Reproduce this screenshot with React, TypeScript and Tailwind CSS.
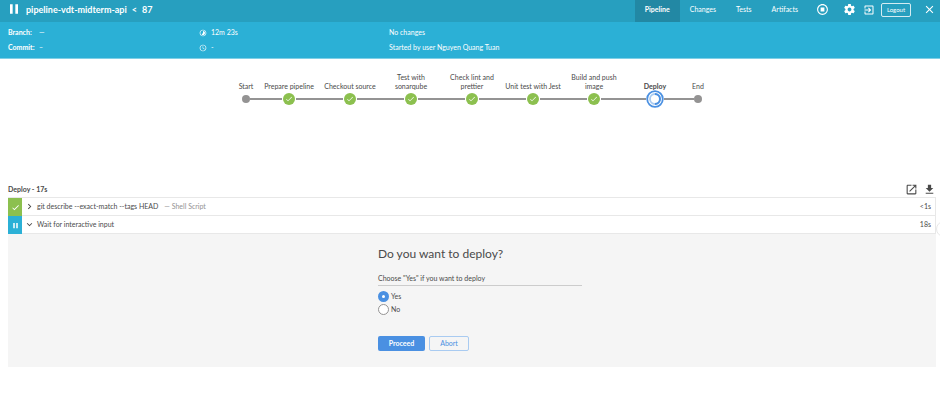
import type { ReactNode } from "react";

type StageState = "edge" | "done" | "running";

const stages: { name: string; state: StageState }[] = [
  { name: "Start", state: "edge" },
  { name: "Prepare pipeline", state: "done" },
  { name: "Checkout source", state: "done" },
  { name: "Test with sonarqube", state: "done" },
  { name: "Check lint and prettier", state: "done" },
  { name: "Unit test with Jest", state: "done" },
  { name: "Build and push image", state: "done" },
  { name: "Deploy", state: "running" },
  { name: "End", state: "edge" },
];

const tabs = ["Pipeline", "Changes", "Tests", "Artifacts"];

function Icon({ d, className }: { d: string; className: string }) {
  return (
    <svg viewBox="0 0 24 24" fill="currentColor" className={className} aria-hidden="true">
      <path d={d} />
    </svg>
  );
}

const icons = {
  check: "M9 16.17L4.83 12l-1.42 1.41L9 19 21 7l-1.41-1.41z",
  pause: "M6 19h4V5H6v14zm8-14v14h4V5h-4z",
  right: "M10 6L8.59 7.41 13.17 12l-4.58 4.59L10 18l6-6z",
  down: "M16.59 8.59L12 13.17 7.41 8.59 6 10l6 6 6-6z",
  close:
    "M19 6.41L17.59 5 12 10.59 6.41 5 5 6.41 10.59 12 5 17.59 6.41 19 12 13.41 17.59 19 19 17.59 13.41 12z",
  launch:
    "M19 19H5V5h7V3H5c-1.11 0-2 .9-2 2v14c0 1.1.89 2 2 2h14c1.1 0 2-.9 2-2v-7h-2v7zM14 3v2h3.59l-9.83 9.83 1.41 1.41L19 6.41V10h2V3h-7z",
  download: "M19 9h-4V3H9v6H5l7 7 7-7zM5 18v2h14v-2H5z",
  exit:
    "M10.09 15.59L11.5 17l5-5-5-5-1.41 1.41L12.67 11H3v2h9.67l-2.58 2.59zM19 3H5c-1.11 0-2 .9-2 2v4h2V5h14v14H5v-4H3v4c0 1.1.89 2 2 2h14c1.1 0 2-.9 2-2V5c0-1.1-.9-2-2-2z",
  gear:
    "M19.43 12.98c.04-.32.07-.64.07-.98s-.03-.66-.07-.98l2.11-1.65c.19-.15.24-.42.12-.64l-2-3.46c-.12-.22-.39-.3-.61-.22l-2.49 1c-.52-.4-1.08-.73-1.69-.98l-.38-2.65C14.46 2.18 14.25 2 14 2h-4c-.25 0-.46.18-.49.42l-.38 2.65c-.61.25-1.17.59-1.69.98l-2.49-1c-.23-.09-.49 0-.61.22l-2 3.46c-.13.22-.07.49.12.64l2.11 1.65c-.04.32-.07.65-.07.98s.03.66.07.98l-2.11 1.65c-.19.15-.24.42-.12.64l2 3.46c.12.22.39.3.61.22l2.49-1c.52.4 1.08.73 1.69.98l.38 2.65c.03.24.24.42.49.42h4c.25 0 .46-.18.49-.42l.38-2.65c.61-.25 1.17-.59 1.69-.98l2.49 1c.23.09.49 0 .61-.22l2-3.46c.12-.22.07-.49-.12-.64l-2.11-1.65zM12 15.5c-1.93 0-3.5-1.57-3.5-3.5s1.57-3.5 3.5-3.5 3.5 1.57 3.5 3.5-1.57 3.5-3.5 3.5z",
  timelapse:
    "M16.24 7.76C15.07 6.59 13.54 6 12 6v6l-4.24 4.24c2.34 2.34 6.14 2.34 8.49 0 2.34-2.34 2.34-6.14-.01-8.48zM12 2C6.48 2 2 6.48 2 12s4.48 10 10 10 10-4.48 10-10S17.52 2 12 2zm0 18c-4.42 0-8-3.58-8-8s3.58-8 8-8 8 3.58 8 8-3.58 8-8 8z",
  clock:
    "M11.99 2C6.47 2 2 6.48 2 12s4.47 10 9.99 10C17.52 22 22 17.52 22 12S17.52 2 11.99 2zM12 20c-4.42 0-8-3.58-8-8s3.58-8 8-8 8 3.58 8 8-3.58 8-8 8zm.5-13H11v6l5.25 3.15.75-1.23-4.5-2.67z",
  stop:
    "M12 2C6.48 2 2 6.48 2 12s4.48 10 10 10 10-4.48 10-10S17.52 2 12 2zm0 18c-4.42 0-8-3.58-8-8s3.58-8 8-8 8 3.58 8 8-3.58 8-8 8zM8.5 8.5h7v7h-7z",
};

function Marker({ state }: { state: StageState }) {
  if (state === "edge") return <span className="size-2 shrink-0 rounded-full bg-[#949393]" />;
  if (state === "done")
    return (
      <span className="mx-px flex size-3 shrink-0 items-center justify-center rounded-full bg-[#8cc04f] text-white">
        <Icon d={icons.check} className="size-2" />
      </span>
    );
  return (
    <svg viewBox="0 0 18 18" className="size-[18px] shrink-0" fill="none" aria-hidden="true">
      <circle cx="9" cy="9" r="7.8" fill="white" stroke="#4a90e2" strokeWidth="1.8" />
      <circle cx="9" cy="9" r="5" stroke="#a9cbf1" strokeWidth="1.8" />
      <path d="M9 4a5 5 0 0 1 0 10" stroke="#4a90e2" strokeWidth="2" />
    </svg>
  );
}

function Stage({ name, state, index }: { name: string; state: StageState; index: number }) {
  const line = "h-[2px] flex-1";
  return (
    <li className={`flex flex-col ${state === "edge" ? "w-[25px]" : "w-[61px]"}`}>
      <span
        className={`flex h-[18px] items-end justify-center text-center leading-[9px] ${
          state === "running" ? "font-bold" : ""
        }`}
      >
        <span className="max-w-[56px]">{name}</span>
      </span>
      <span className="flex h-4 items-center">
        <span className={`${line} ${index === 0 ? "" : "bg-[#949393]"}`} />
        <Marker state={state} />
        <span className={`${line} ${index === stages.length - 1 ? "" : "bg-[#949393]"}`} />
      </span>
    </li>
  );
}

function Step({
  done,
  time,
  children,
}: {
  done: boolean;
  time: string;
  children: ReactNode;
}) {
  return (
    <li className="flex h-[18px] items-stretch border-r border-b border-[#e8e8e8]">
      <span
        className={`-mb-px flex w-[14px] items-center justify-center text-white ${
          done ? "bg-[#8cc04f]" : "bg-[#2bb0d6]"
        }`}
      >
        <Icon d={done ? icons.check : icons.pause} className="size-[9px]" />
      </span>
      <button type="button" className="flex flex-1 items-center pr-1 pl-[2px] text-left">
        <Icon d={done ? icons.right : icons.down} className="size-[11px]" />
        <span className="ml-[2px] flex-1">{children}</span>
        <span>{time}</span>
      </button>
    </li>
  );
}

function Choice({ label, checked }: { label: string; checked?: boolean }) {
  return (
    <label className="flex h-[13px] items-center gap-[2px]">
      <input
        type="radio"
        name="deploy"
        defaultChecked={checked}
        className="size-[11px] appearance-none rounded-full border border-[#949393] bg-white checked:border-4 checked:border-[#4a90e2]"
      />
      {label}
    </label>
  );
}

export default function App() {
  return (
    <div className="relative min-h-screen overflow-x-hidden bg-white font-['Lato',sans-serif] text-[7px] leading-[9px] text-[#4a4a4a]">
      <header className="text-white">
        <div className="flex h-[22px] bg-[#279fbf] pr-1 pl-[6px]">
          <h1 className="flex flex-1 items-center pb-1 text-[9px] font-bold">
            <Icon d={icons.pause} className="mr-1 size-4" />
            <a href="#pipeline">pipeline-vdt-midterm-api</a>
            <span className="mx-[5px]">&lt;</span>
            <span>87</span>
          </h1>
          <nav className="flex h-full">
            {tabs.map((tab, i) => (
              <a
                key={tab}
                href={`#${tab.toLowerCase()}`}
                className={`flex items-center px-[10px] pb-1 ${
                  i === 0 ? "bg-[#2288a4] font-bold" : ""
                }`}
              >
                {tab}
              </a>
            ))}
          </nav>
          <div className="ml-2 flex items-center pb-[3px]">
            <button type="button" aria-label="Stop" className="mr-[14px]">
              <Icon d={icons.stop} className="size-[13px]" />
            </button>
            <button type="button" aria-label="Settings" className="mr-[7px]">
              <Icon d={icons.gear} className="size-[13px]" />
            </button>
            <button type="button" aria-label="Classic view" className="mr-[6px]">
              <Icon d={icons.exit} className="size-3" />
            </button>
            <button
              type="button"
              className="mr-3 h-[14px] w-[30px] rounded-xs border border-white/80 text-[6px]"
            >
              Logout
            </button>
            <button type="button" aria-label="Close">
              <Icon d={icons.close} className="size-[13px]" />
            </button>
          </div>
        </div>
        <div className="flex h-[37px] border-b border-[#7fcfe6] bg-[#2bb0d6] pt-[3px] pl-2 leading-[15px]">
          <dl className="grid w-[191px] grid-cols-[31px_1fr] content-start">
            <dt className="font-bold">Branch:</dt>
            <dd>—</dd>
            <dt className="font-bold">Commit:</dt>
            <dd>–</dd>
          </dl>
          <div className="w-[190px]">
            <p className="flex items-center gap-1">
              <Icon d={icons.timelapse} className="size-2" />
              12m 23s
            </p>
            <p className="flex items-center gap-1">
              <Icon d={icons.clock} className="size-2" />-
            </p>
          </div>
          <div>
            <p>No changes</p>
            <p>Started by user Nguyen Quang Tuan</p>
          </div>
        </div>
      </header>

      <main className="pr-1 pl-2">
        <ol className="flex justify-center pt-[14px]">
          {stages.map((s, i) => (
            <Stage key={s.name} name={s.name} state={s.state} index={i} />
          ))}
        </ol>

        <div className="mt-[76px] flex h-3 items-center">
          <h2 className="flex-1 font-bold">Deploy - 17s</h2>
          <button type="button" aria-label="Open log" className="mr-[5px]">
            <Icon d={icons.launch} className="size-[13px]" />
          </button>
          <button type="button" aria-label="Download log">
            <Icon d={icons.download} className="size-[13px]" />
          </button>
        </div>

        <ul className="mt-[2px] border-t border-[#e8e8e8]">
          <Step done time="<1s">
            git describe --exact-match --tags HEAD
            <span className="ml-[6px] text-[#949393]">— Shell Script</span>
          </Step>
          <Step done={false} time="18s">
            Wait for interactive input
          </Step>
        </ul>

        <form
          className="flex justify-center bg-[#f5f5f5] pt-3 pb-4 pl-4"
          onSubmit={(e) => e.preventDefault()}
        >
          <div className="w-[204px]">
            <h3 className="mb-3 text-[12px] leading-4">Do you want to deploy?</h3>
            <fieldset>
              <legend className="mb-1 w-full border-b border-[#cccccc] pb-[2px]">
                Choose "Yes" if you want to deploy
              </legend>
              <Choice label="Yes" checked />
              <Choice label="No" />
            </fieldset>
            <div className="mt-5 flex gap-1">
              <button
                type="submit"
                className="h-[15px] w-[47px] rounded-xs bg-[#4a90e2] font-bold text-white"
              >
                Proceed
              </button>
              <button
                type="button"
                className="h-[15px] w-10 rounded-xs border border-[#a9cbf1] text-[#4a90e2]"
              >
                Abort
              </button>
            </div>
          </div>
        </form>
      </main>
      <button
        type="button"
        aria-label="Open side panel"
        className="absolute top-[221px] -right-3 size-4 rounded-full border border-[#e8e8e8] bg-white"
      />
    </div>
  );
}
